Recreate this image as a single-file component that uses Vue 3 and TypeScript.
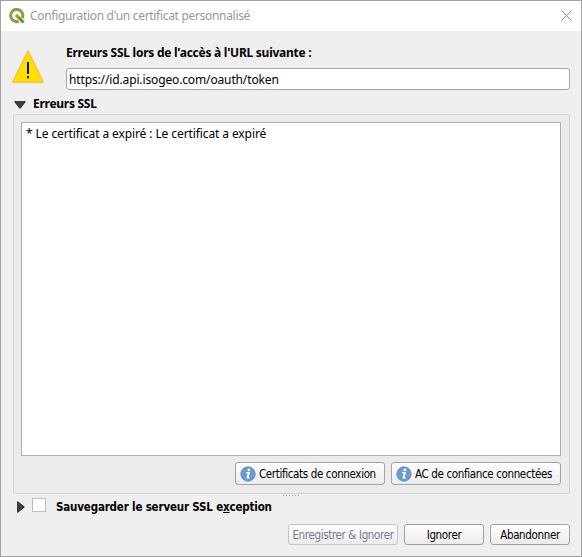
<script setup lang="ts">
import { ref } from 'vue'

const url = ref<string>('https://id.api.isogeo.com/oauth/token')
const errors: string[] = ['* Le certificat a expiré : Le certificat a expiré']
const infoButtons: { label: string; kind: string }[] = [
  { label: 'Certificats de connexion', kind: 'certs' },
  { label: 'AC de confiance connectées', kind: 'authorities' },
]
</script>

<template>
  <div class="dialog">
    <header class="titlebar">
      <svg class="logo" viewBox="0 0 16 16" width="16" height="16">
        <path d="M13.2 10.2A6.1 6.1 0 1 0 9.6 13.3" fill="none" stroke="#76a844" stroke-width="3" />
        <path d="M9.3 9.3L14.6 14.6" stroke="#589632" stroke-width="2.8" />
        <path d="M6.9 6.9L9.6 9.6" stroke="#ee7913" stroke-width="3" />
      </svg>
      <span class="title">Configuration d'un certificat personnalisé</span>
      <svg class="close" viewBox="0 0 11 11" width="11" height="11">
        <path d="M.5 .5L10.5 10.5M10.5 .5L.5 10.5" stroke="#8c8c8c" stroke-width="1" />
      </svg>
    </header>

    <main class="content">
      <section class="intro">
        <svg class="warning" viewBox="0 0 32 33" width="32" height="33">
          <path d="M16 1L31.4 32.2H.6Z" fill="#ffe000" stroke="#fdb92a" stroke-width="1.2" />
          <path d="M16 12V24M16 26V28.2" stroke="#111" stroke-width="2" />
        </svg>
        <div class="address">
          <label class="bold url-label">Erreurs SSL lors de l'accès à l'URL suivante :</label>
          <div class="url-field"><span>{{ url }}</span></div>
        </div>
      </section>

      <div class="group-head">
        <svg viewBox="0 0 12 8" width="12" height="8">
          <path d="M.7 .7H11.3L6 7.4Z" fill="#404040" stroke="#202020" />
        </svg>
        <span class="bold group-title">Erreurs SSL</span>
      </div>

      <section class="group">
        <div class="errors">
          <p v-for="line in errors" :key="line">{{ line }}</p>
        </div>
        <div class="info-row">
          <button v-for="b in infoButtons" :key="b.kind" class="btn info" :class="b.kind">
            <svg viewBox="0 0 16 16" width="16" height="16">
              <circle cx="8" cy="8" r="7.2" fill="#6a9bd1" stroke="#5d86b4" stroke-width=".8" />
              <circle cx="8.9" cy="3.9" r="1.4" fill="#fff" />
              <path d="M6 6.6H9.2L7.8 12H9.4M8.5 7L7.1 12" fill="none" stroke="#fff" stroke-width="1.3" />
            </svg>
            <span>{{ b.label }}</span>
          </button>
        </div>
      </section>
      <div class="handle"><i v-for="n in 6" :key="n"></i></div>

      <div class="exception">
        <svg viewBox="0 0 8 12" width="8" height="12">
          <path d="M.7 .7V11.3L7.3 6Z" fill="#404040" stroke="#202020" />
        </svg>
        <span class="checkbox"></span>
        <span class="exception-title">Sauvegarder le serveur SSL e<u>x</u>ception</span>
      </div>

      <footer class="actions">
        <button class="btn save" disabled><span>Enregistrer &amp; Ignorer</span></button>
        <button class="btn ignore"><span>Ignorer</span></button>
        <button class="btn abort"><span>Abandonner</span></button>
      </footer>
    </main>
  </div>
</template>

<style>
body {
  margin: 0;
  overflow: hidden;
}
</style>

<style scoped>
.dialog {
  box-sizing: border-box;
  width: 582px;
  height: 557px;
  border: 1px solid #a3a3a3;
  background: #efefef;
  color: #000;
  font: 12px/16px "Noto Sans", "Open Sans", sans-serif;
  white-space: nowrap;
}
.titlebar {
  display: flex;
  align-items: center;
  height: 30px;
  padding: 0 9px 0 8px;
  background: #fff;
}
.title {
  margin-left: 5px;
  color: #999;
  letter-spacing: -0.31px;
}
.close {
  margin-left: auto;
  margin-bottom: 2px;
}
.content {
  padding: 0 11px;
}
.intro {
  display: flex;
  padding-top: 14px;
}
.warning {
  margin-top: 5px;
}
.address {
  flex: 1;
  margin-left: 22px;
}
.bold {
  font-weight: 700;
}
.url-label {
  display: block;
  letter-spacing: -0.26px;
}
.url-field {
  box-sizing: border-box;
  height: 22px;
  margin-top: 7px;
  padding: 3px 2px 0;
  border: 1px solid #a6a6a6;
  border-radius: 3px;
  background: #fff;
  letter-spacing: -0.135px;
}
.group-head {
  display: flex;
  align-items: center;
  height: 16px;
  margin: 6px 0 0 2px;
}
.group-head svg {
  margin-top: 2px;
}
.group-title {
  margin-left: 7px;
  letter-spacing: -0.27px;
}
.group {
  box-sizing: border-box;
  height: 380px;
  margin-top: 2px;
  margin-left: 1px;
  padding: 7px 8px 7px 7px;
  border: 1px solid #d2d2d2;
  border-radius: 2px;
  background: #ebebeb;
}
.errors {
  box-sizing: border-box;
  height: 334px;
  padding: 3px 4px;
  border: 1px solid #b0b0b0;
  background: #fff;
  letter-spacing: -0.1px;
}
.errors p {
  margin: 0;
}
.info-row {
  display: flex;
  justify-content: flex-end;
  gap: 6px;
  margin-top: 6px;
}
.btn {
  box-sizing: border-box;
  display: flex;
  align-items: center;
  justify-content: center;
  height: 21px;
  padding: 0;
  border: 1px solid #a2a2a2;
  border-radius: 3px;
  background: linear-gradient(#fefefe, #ebebeb);
  color: #000;
  font: 11.5px/16px "DejaVu Sans Condensed", "DejaVu Sans", sans-serif;
  font-stretch: condensed;
  letter-spacing: -0.36px;
}
.btn span {
  padding-top: 1px;
}
.info {
  height: 23px;
  justify-content: flex-start;
  padding-left: 4px;
}
.info svg {
  flex: none;
}
.info span {
  margin-left: 3px;
}
.certs {
  width: 150px;
}
.authorities {
  width: 170px;
}
.handle {
  box-sizing: border-box;
  display: flex;
  justify-content: center;
  gap: 2px;
  height: 4px;
  padding-top: 1px;
}
.handle i {
  width: 1px;
  height: 1px;
  background: #aaa;
}
.exception {
  display: flex;
  align-items: center;
  height: 14px;
  padding-left: 5px;
}
.exception svg {
  margin-top: 3px;
}
.checkbox {
  box-sizing: border-box;
  width: 14px;
  height: 14px;
  margin-left: 7px;
  border: 1px solid #bdbdbd;
  background: #fff;
}
.exception-title {
  margin-top: 3px;
  margin-left: 10px;
  font: bold 11.5px/16px "DejaVu Sans Condensed", "DejaVu Sans", sans-serif;
  font-stretch: condensed;
  letter-spacing: -0.18px;
}
.actions {
  display: flex;
  justify-content: flex-end;
  gap: 6px;
  margin-top: 12px;
}
.save {
  width: 110px;
  border-color: #c4c4c4;
  color: #7d7a8a;
}
.ignore,
.abort {
  width: 80px;
}
</style>
